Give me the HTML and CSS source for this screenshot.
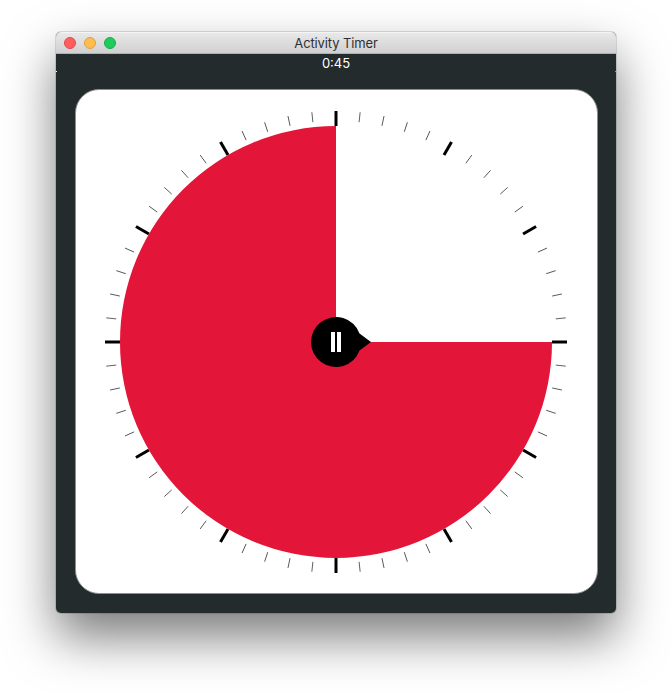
FILE: index.html
```html
<!DOCTYPE html>
<html lang="en">
<head>
<meta charset="utf-8">
<title>Activity Timer</title>
<link rel="stylesheet" href="styles.css">
</head>
<body>
<main class="window">
  <header class="titlebar">
    <div class="controls">
      <span class="dot close"></span>
      <span class="dot minimize"></span>
      <span class="dot zoom"></span>
    </div>
    <h1 class="title">Activity Timer</h1>
  </header>
  <div class="readout">0:45</div>
  <div class="seam"><i class="speck"></i><i class="speck faint"></i></div>
  <section class="card">
    <svg class="dial" width="521" height="503" viewBox="-260 -252 521 503">
      <defs>
        <g id="hour">
          <path class="major" d="M0-216V-231"/>
          <path class="minor" d="M0-221V-231" transform="rotate(6)"/>
          <path class="minor" d="M0-221V-231" transform="rotate(12)"/>
          <path class="minor" d="M0-221V-231" transform="rotate(18)"/>
          <path class="minor" d="M0-221V-231" transform="rotate(24)"/>
        </g>
        <g id="quarter">
          <use href="#hour"/>
          <use href="#hour" transform="rotate(30)"/>
          <use href="#hour" transform="rotate(60)"/>
        </g>
      </defs>
      <use href="#quarter"/>
      <use href="#quarter" transform="rotate(90)"/>
      <use href="#quarter" transform="rotate(180)"/>
      <use href="#quarter" transform="rotate(270)"/>
      <path class="remaining" d="M0 0H216A216 216 0 1 1 0-216Z"/>
      <path class="knob" d="M23.5-8.5L35 0L23.5 8.5A25 25 0 1 1 23.5-8.5Z"/>
      <path class="pause" d="M-5-10H-1V10H-5ZM1-10H5V10H1Z"/>
    </svg>
  </section>
</main>
</body>
</html>
```
FILE: styles.css
```css
* { box-sizing: border-box; }

body {
  margin: 0;
  height: 693px;
  padding: 32px 56px 0;
  overflow: hidden;
  background: #fff;
  font-family: "Inter", "Liberation Sans", sans-serif;
}

.window {
  height: 581px;
  overflow: hidden;
  border-radius: 5px;
  background: #232b2d;
  box-shadow: 0 0 0 1px rgba(0, 0, 0, .12), 0 24px 50px rgba(0, 0, 0, .52);
}

.titlebar {
  display: grid;
  grid-template-columns: 100px 1fr 100px;
  align-items: center;
  height: 22px;
  border-top: 1px solid #f5f5f5;
  border-bottom: 1px solid #aab5ac;
  background: linear-gradient(#e8e8e8, #d0d0d0);
}

.controls {
  display: flex;
  gap: 8px;
  padding-left: 8px;
}

.dot {
  width: 12px;
  height: 12px;
  border: 1px solid;
  border-radius: 50%;
}

.close { background: #ff5f5c; border-color: #e2474a; }
.minimize { background: #ffbd4f; border-color: #dfa044; }
.zoom { background: #1dcc5b; border-color: #17ac4a; }

.title {
  margin: 0;
  color: #303030;
  font-size: 13px;
  font-weight: 400;
  letter-spacing: -.13px;
  line-height: 20px;
  text-align: center;
}

.readout {
  height: 17px;
  color: #fff;
  font-size: 13px;
  line-height: 18px;
  text-align: center;
}

.seam {
  display: flex;
  justify-content: space-between;
  height: 1px;
}

.speck {
  width: 1px;
  background: #fff;
}

.faint { opacity: .5; }

.card {
  width: 523px;
  height: 505px;
  margin: 17px 0 0 19px;
  overflow: hidden;
  border: 1px solid #8b908f;
  border-radius: 24px;
  background: #fff;
}

.dial { display: block; }
.major { stroke: #000; stroke-width: 3; }
.minor { stroke: #000; stroke-width: .6; }
.remaining { fill: #e3163a; }
.knob { fill: #000; }
.pause { fill: #fff; }
```
